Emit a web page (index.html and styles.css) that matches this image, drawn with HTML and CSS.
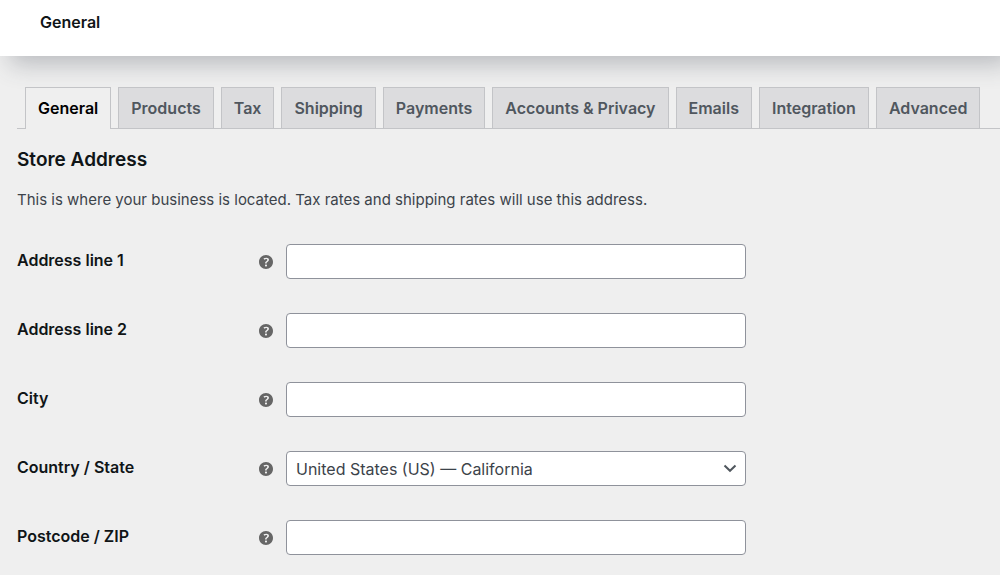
FILE: index.html
```html
<!DOCTYPE html>
<html lang="en">
<head>
<meta charset="utf-8">
<meta name="viewport" content="width=device-width, initial-scale=1">
<title>General</title>
<link rel="stylesheet" href="styles.css">
</head>
<body>
<svg class="symbols" aria-hidden="true">
  <symbol id="help" viewBox="0 0 20 20">
    <path d="M17 10c0-3.87-3.14-7-7-7-3.87 0-7 3.13-7 7s3.13 7 7 7c3.86 0 7-3.13 7-7zm-6.3 1.48H9.14v-.43c0-.38.08-.7.24-.98s.46-.57.88-.89c.41-.29.68-.53.81-.71.14-.18.2-.39.2-.62 0-.25-.09-.44-.28-.58-.19-.13-.45-.19-.79-.19-.58 0-1.25.19-2 .57l-.64-1.28c.87-.49 1.8-.74 2.77-.74.81 0 1.45.2 1.92.58.48.39.71.91.71 1.55 0 .43-.09.8-.29 1.11-.19.32-.57.67-1.11 1.06-.38.28-.61.49-.71.63-.1.15-.15.34-.15.57v.35zm-1.47 2.74c-.18-.17-.27-.42-.27-.73 0-.33.08-.58.26-.75s.43-.25.77-.25c.32 0 .57.09.75.26s.27.42.27.74c0 .3-.09.55-.27.72-.18.18-.43.27-.75.27-.33 0-.58-.09-.76-.26z"/>
  </symbol>
</svg>
<header class="page-header">
  <h1 class="page-title">General</h1>
</header>
<main class="content">
  <nav class="tabs" aria-label="Settings">
    <a class="tab tab-active" href="#" aria-current="page">General</a>
    <a class="tab" href="#">Products</a>
    <a class="tab" href="#">Tax</a>
    <a class="tab" href="#">Shipping</a>
    <a class="tab" href="#">Payments</a>
    <a class="tab" href="#">Accounts &amp; Privacy</a>
    <a class="tab" href="#">Emails</a>
    <a class="tab" href="#">Integration</a>
    <a class="tab" href="#">Advanced</a>
  </nav>
  <h2 class="section-title">Store Address</h2>
  <p class="description">This is where your business is located. Tax rates and shipping rates will use this address.</p>
  <form class="form">
    <div class="row">
      <label class="label" for="address-1">Address line 1</label>
      <svg class="help" aria-hidden="true"><use href="#help"/></svg>
      <input class="field" type="text" id="address-1">
    </div>
    <div class="row">
      <label class="label" for="address-2">Address line 2</label>
      <svg class="help" aria-hidden="true"><use href="#help"/></svg>
      <input class="field" type="text" id="address-2">
    </div>
    <div class="row">
      <label class="label" for="city">City</label>
      <svg class="help" aria-hidden="true"><use href="#help"/></svg>
      <input class="field" type="text" id="city">
    </div>
    <div class="row">
      <label class="label" for="country">Country / State</label>
      <svg class="help" aria-hidden="true"><use href="#help"/></svg>
      <div class="select-wrap">
        <select class="field select" id="country">
          <option>United States (US) — California</option>
        </select>
        <svg class="chevron" viewBox="0 0 14 14" aria-hidden="true"><path d="M1.500 4.500 7 9.800l5.500-5.300"/></svg>
      </div>
    </div>
    <div class="row">
      <label class="label" for="postcode">Postcode / ZIP</label>
      <svg class="help" aria-hidden="true"><use href="#help"/></svg>
      <input class="field" type="text" id="postcode">
    </div>
  </form>
</main>
</body>
</html>
```
FILE: styles.css
```css
* {
  box-sizing: border-box;
}

body {
  margin: 0;
  overflow-x: hidden;
  background: #efefef;
  color: #3c434a;
  font-family: Inter, "Liberation Sans", sans-serif;
  font-size: 15px;
  line-height: 20px;
}

.symbols {
  display: none;
}

.page-header {
  padding: 12px 40px 24px;
  background: #fff;
  box-shadow: 10px 8px 24px rgba(60, 65, 80, 0.3);
}

.page-title {
  margin: 0;
  color: #101517;
  font-size: 16px;
  font-weight: 600;
  line-height: 20px;
}

.content {
  padding: 31px 0 0 17px;
}

.tabs {
  display: flex;
  gap: 7px;
  padding-left: 8px;
  border-bottom: 1px solid #c3c4c7;
}

.tab {
  padding: 10px 12px;
  border: 1px solid #c3c4c7;
  border-bottom: 0;
  background: #dcdcde;
  color: #50575e;
  font-size: 16px;
  font-weight: 600;
  line-height: 20px;
  text-decoration: none;
  white-space: nowrap;
}

.tab-active {
  margin-bottom: -1px;
  background: #efefef;
  color: #000;
}

.section-title {
  margin: 19px 0 18px;
  color: #101517;
  font-size: 19px;
  font-weight: 600;
  line-height: 24px;
}

.description {
  margin: 0 0 17px;
}

.row {
  display: grid;
  grid-template-columns: 239px 30px minmax(0, 460px);
  align-items: center;
  min-height: 69px;
}

.label {
  padding-bottom: 3px;
  color: #101517;
  font-size: 16px;
  font-weight: 600;
}

.help {
  width: 20px;
  height: 20px;
  fill: #666;
}

.field {
  width: 100%;
  height: 35px;
  padding: 0 9px;
  border: 1px solid #8f929b;
  border-radius: 4px;
  background: #fff;
  color: #3c434a;
  font: inherit;
}

.select-wrap {
  position: relative;
}

.select {
  display: block;
  appearance: none;
  font-size: 16px;
}

.chevron {
  position: absolute;
  top: 10px;
  right: 9px;
  width: 14px;
  height: 14px;
  fill: none;
  stroke: #50575e;
  stroke-width: 2;
  pointer-events: none;
}
```
